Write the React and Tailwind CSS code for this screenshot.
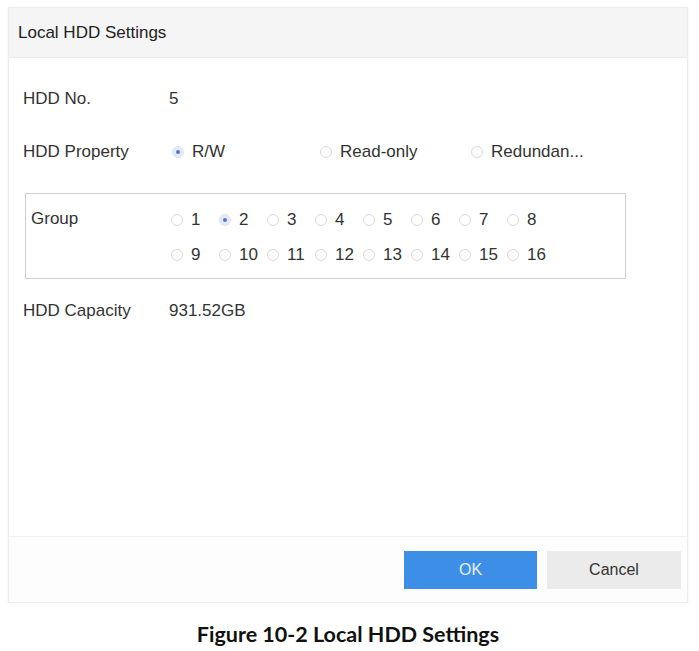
import React from "react";

const Radio = ({ checked, label, className = "" }) => (
  <div className={`flex items-center gap-[8px] ${className}`}>
    {checked ? (
      <span className="w-[12px] h-[12px] rounded-full bg-[#e6ebfb] border border-[#dfe4f6] flex items-center justify-center">
        <span className="w-[4px] h-[4px] rounded-full bg-[#5a6fd8]" />
      </span>
    ) : (
      <span className="w-[12px] h-[12px] rounded-full border border-[#d9d9d9] bg-white" />
    )}
    <span>{label}</span>
  </div>
);

const groups = Array.from({ length: 16 }, (_, i) => i + 1);

export default function App() {
  return (
    <div
      className="w-[699px] h-[651px] bg-white pt-[7px] pl-[8px]"
      style={{ fontFamily: '"Liberation Sans", Arial, sans-serif' }}
    >
      <div className="w-[680px] h-[596px] border border-[#ededed] shadow-[0_0_3px_rgba(0,0,0,0.05)] flex flex-col text-[17px] text-[#333]">
        {/* header */}
        <div className="h-[50px] bg-[#f5f5f5] border-b border-[#ebebeb] flex items-center pl-[9px] text-[17px] text-[#222]">
          Local HDD Settings
        </div>

        {/* body */}
        <div className="flex-1 pt-[24px] pl-[14px]">
          <div className="flex items-center h-[34px]">
            <div className="w-[146px]">HDD No.</div>
            <div>5</div>
          </div>

          <div className="flex items-center h-[34px] mt-[19px]">
            <div className="w-[149px]">HDD Property</div>
            <Radio checked label="R/W" className="w-[148px]" />
            <Radio label="Read-only" className="w-[151px]" />
            <Radio label="Redundan..." />
          </div>

          <div className="ml-[2px] mt-[24px] w-[601px] h-[86px] border border-[#cfcfcf] flex pl-[5px] pt-[8px]">
            <div className="w-[140px] h-[34px] flex items-center">Group</div>
            <div className="grid grid-cols-[repeat(8,48px)] auto-rows-[35px] items-center">
              {groups.map((g) => (
                <Radio key={g} checked={g === 2} label={String(g)} />
              ))}
            </div>
          </div>

          <div className="flex items-center h-[34px] mt-[15px]">
            <div className="w-[146px]">HDD Capacity</div>
            <div>931.52GB</div>
          </div>
        </div>

        {/* footer */}
        <div className="h-[66px] border-t border-[#f2f2f2] bg-[#fdfdfd] flex items-start justify-end pt-[14px] pr-[6px] gap-[10px]">
          <button className="w-[133px] h-[38px] bg-[#3d8ee6] text-[#e6f0fc] text-[16px]">
            OK
          </button>
          <button className="w-[134px] h-[38px] bg-[#ebebeb] text-[#333] text-[16px]">
            Cancel
          </button>
        </div>
      </div>

      <div
        className="mt-[15px] w-[680px] text-center font-bold text-[21.5px] text-[#111]"
        style={{ fontFamily: 'Lato, "Open Sans", sans-serif' }}
      >
        Figure 10-2 Local HDD Settings
      </div>
    </div>
  );
}
